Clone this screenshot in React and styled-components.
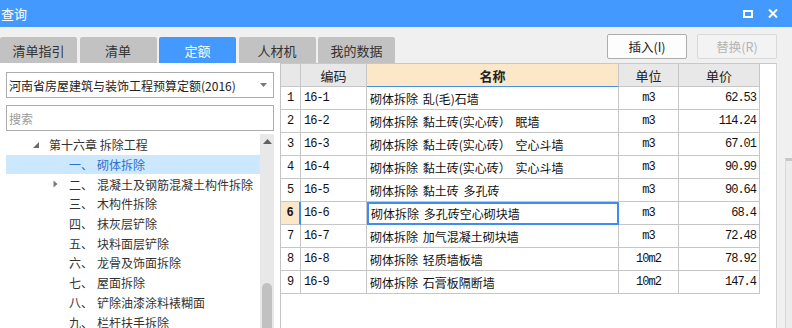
import styled, { createGlobalStyle } from "styled-components";

const Global = createGlobalStyle`
  html, body { margin: 0; padding: 0; }
  body {
    width: 792px;
    height: 328px;
    overflow: hidden;
    background: #ffffff;
    font-family: "Noto Sans CJK SC", "Noto Sans", sans-serif;
    color: #333;
  }
  * { box-sizing: border-box; }
`;

const Window = styled.div`
  width: 792px;
  height: 328px;
  display: flex;
  flex-direction: column;
  overflow: hidden;
`;

const TitleBar = styled.div`
  height: 27px;
  flex: 0 0 27px;
  background: #4499fe;
  color: #fff;
  display: flex;
  align-items: center;
  padding: 0 14px 0 1px;
  font-size: 13px;
`;

const TitleText = styled.div`
  flex: 1;
`;

const TitleIcons = styled.div`
  display: flex;
  align-items: center;
  gap: 15px;
`;

const Toolbar = styled.div`
  height: 36px;
  flex: 0 0 36px;
  background: #f0f0f0;
  display: flex;
  align-items: flex-end;
  padding-right: 15px;
`;

const Tabs = styled.div`
  display: flex;
  gap: 2.5px;
  flex: 1;
`;

const Tab = styled.div`
  width: 77px;
  height: 26px;
  border-radius: 2px 2px 0 0;
  background: ${(p) => (p.$active ? "#4499fe" : "#c2c2c2")};
  color: ${(p) => (p.$active ? "#fff" : "#333")};
  font-size: 13px;
  display: flex;
  align-items: center;
  justify-content: center;
`;

const Buttons = styled.div`
  display: flex;
  gap: 10px;
  align-self: flex-start;
  margin-top: 7px;
`;

const Button = styled.div`
  width: 80px;
  height: 25px;
  border: 1px solid ${(p) => (p.$disabled ? "#d9d9d9" : "#adadad")};
  border-radius: 2px;
  background: ${(p) => (p.$disabled ? "#f3f3f3" : "#fdfdfd")};
  color: ${(p) => (p.$disabled ? "#b4b4b4" : "#222")};
  font-size: 12.5px;
  display: flex;
  align-items: center;
  justify-content: center;
`;

const Main = styled.div`
  flex: 1;
  display: flex;
  min-height: 0;
`;

const LeftPanel = styled.div`
  width: 280px;
  flex: 0 0 280px;
  padding: 9px 6px 0 6px;
  display: flex;
  flex-direction: column;
  background: #fff;
`;

const Select = styled.div`
  height: 26px;
  border: 1px solid #acacac;
  display: flex;
  align-items: center;
  padding: 0 6px 0 2px;
  font-size: 12px;
  color: #222;
  white-space: nowrap;
`;

const SelectText = styled.div`
  flex: 1;
`;

const Search = styled.div`
  height: 26px;
  margin-top: 7px;
  border: 1px solid #acacac;
  display: flex;
  align-items: center;
  padding-left: 2px;
  font-size: 12px;
  color: #9a9a9a;
`;

const TreeArea = styled.div`
  flex: 1;
  margin-top: 3px;
  display: flex;
  min-height: 0;
`;

const TreeList = styled.div`
  flex: 1;
  padding-top: 1px;
`;

const TreeRow = styled.div`
  height: 19.7px;
  display: flex;
  align-items: center;
  padding-left: ${(p) => p.$indent}px;
  background: ${(p) => (p.$selected ? "#cce8ff" : "transparent")};
  color: ${(p) => (p.$selected ? "#2f6fd0" : "#333")};
  font-size: 12px;
  white-space: nowrap;
`;

const Toggle = styled.div`
  width: 16px;
  flex: 0 0 16px;
  display: flex;
  align-items: center;
`;

const Num = styled.div`
  width: 28px;
  flex: 0 0 28px;
`;

const ScrollBar = styled.div`
  width: 14px;
  flex: 0 0 14px;
  background: #e8e8e8;
  display: flex;
  flex-direction: column;
  align-items: center;
`;

const ScrollArrow = styled.div`
  height: 12px;
  display: flex;
  align-items: center;
  margin-top: 1px;
`;

const ScrollThumb = styled.div`
  width: 10px;
  margin-top: 136px;
  flex: 1;
  background: #c1c1c1;
  border-radius: 5px 5px 0 0;
`;

const TablePanel = styled.div`
  width: 497px;
  flex: 0 0 497px;
  border-left: 1px solid #c4c4c4;
  border-right: 1px solid #d4d4d4;
  border-top: 1px solid #c8c8c8;
  background: #fff;
`;

const Grid = styled.div`
  display: grid;
  grid-template-columns: 20px 66px 252px 60px 81px;
  grid-auto-rows: 23px;
  width: 479px;
`;

const HeadCell = styled.div`
  background: ${(p) => (p.$hot ? "#fde7c9" : "#e8e8e8")};
  border-right: 1px solid #c6c6c6;
  border-bottom: 1px solid ${(p) => (p.$hot ? "#4a90e2" : "#c6c6c6")};
  font-size: 13px;
  font-weight: ${(p) => (p.$hot ? 700 : 400)};
  color: #222;
  display: flex;
  align-items: center;
  justify-content: center;
`;

const Cell = styled.div`
  border-right: 1px solid #c6c6c6;
  border-bottom: 1px solid #c6c6c6;
  display: flex;
  align-items: center;
  justify-content: ${(p) => p.$align || "flex-start"};
  padding: 0 3px;
  font-size: 12px;
  color: #111;
  white-space: nowrap;
  overflow: hidden;
`;

const RowNum = styled(Cell)`
  justify-content: center;
  padding: 0;
  font-family: "Liberation Mono", monospace;
  font-size: 12px;
  background: ${(p) => (p.$current ? "#fde7c9" : "#fff")};
  font-weight: ${(p) => (p.$current ? 700 : 400)};
  border-right: ${(p) => (p.$current ? "2px solid #3d8ef0" : "1px solid #c6c6c6")};
`;

const Mono = styled(Cell)`
  font-family: "Liberation Mono", monospace;
  font-size: 12px;
  letter-spacing: -1px;
`;

const NameCell = styled(Cell)`
  border: ${(p) => (p.$selected ? "2px solid #3d8ef0" : undefined)};
  padding-left: ${(p) => (p.$selected ? "2px" : "3px")};
  word-spacing: 2px;
`;

const RightStrip = styled.div`
  flex: 1;
  background: #f0f0f0;
  display: flex;
  justify-content: flex-end;
`;

const StripInner = styled.div`
  width: 7px;
  margin-top: 95px;
  border-top: 3px solid #c8c8c8;
  border-left: 1px solid #dadada;
  background: #ececec;
`;

const tabs = ["清单指引", "清单", "定额", "人材机", "我的数据"];

const tree = [
  ["一、", "砌体拆除", false],
  ["二、", "混凝土及钢筋混凝土构件拆除", true],
  ["三、", "木构件拆除", false],
  ["四、", "抹灰层铲除", false],
  ["五、", "块料面层铲除", false],
  ["六、", "龙骨及饰面拆除", false],
  ["七、", "屋面拆除", false],
  ["八、", "铲除油漆涂料裱糊面", false],
  ["九、", "栏杆扶手拆除", false],
];

const rows = [
  ["16-1", "砌体拆除 乱(毛)石墙", "m3", "62.53"],
  ["16-2", "砌体拆除 黏土砖(实心砖） 眠墙", "m3", "114.24"],
  ["16-3", "砌体拆除 黏土砖(实心砖） 空心斗墙", "m3", "67.01"],
  ["16-4", "砌体拆除 黏土砖(实心砖） 实心斗墙", "m3", "90.99"],
  ["16-5", "砌体拆除 黏土砖 多孔砖", "m3", "90.64"],
  ["16-6", "砌体拆除 多孔砖空心砌块墙", "m3", "68.4"],
  ["16-7", "砌体拆除 加气混凝土砌块墙", "m3", "72.48"],
  ["16-8", "砌体拆除 轻质墙板墙", "10m2", "78.92"],
  ["16-9", "砌体拆除 石膏板隔断墙", "10m2", "147.4"],
];

export default function App() {
  return (
    <Window>
      <Global />
      <TitleBar>
        <TitleText>查询</TitleText>
        <TitleIcons>
          <svg width="10" height="8" viewBox="0 0 10 8">
            <rect x="1" y="1" width="8" height="6" fill="none" stroke="#fff" strokeWidth="2" />
          </svg>
          <svg width="10" height="9" viewBox="0 0 10 9">
            <path d="M1 0.5 L9 8.5 M9 0.5 L1 8.5" stroke="#fff" strokeWidth="2" />
          </svg>
        </TitleIcons>
      </TitleBar>
      <Toolbar>
        <Tabs>
          {tabs.map((t) => (
            <Tab key={t} $active={t === "定额"}>{t}</Tab>
          ))}
        </Tabs>
        <Buttons>
          <Button>插入(I)</Button>
          <Button $disabled>替换(R)</Button>
        </Buttons>
      </Toolbar>
      <Main>
        <LeftPanel>
          <Select>
            <SelectText>河南省房屋建筑与装饰工程预算定额(2016)</SelectText>
            <svg width="7" height="4" viewBox="0 0 7 4">
              <path d="M0 0 H7 L3.5 4 Z" fill="#777" />
            </svg>
          </Select>
          <Search>搜索</Search>
          <TreeArea>
            <TreeList>
              <TreeRow $indent={27}>
                <Toggle>
                  <svg width="6" height="6" viewBox="0 0 6 6">
                    <path d="M6 0 V6 H0 Z" fill="#6a6a6a" />
                  </svg>
                </Toggle>
                第十六章 拆除工程
              </TreeRow>
              {tree.map(([n, name, exp], i) => (
                <TreeRow key={n} $indent={47} $selected={i === 0}>
                  <Toggle>
                    {exp && (
                      <svg width="5" height="8" viewBox="0 0 5 8">
                        <path d="M0.5 0.5 L4.5 4 L0.5 7.5 Z" fill="#777" />
                      </svg>
                    )}
                  </Toggle>
                  <Num>{n}</Num>
                  {name}
                </TreeRow>
              ))}
            </TreeList>
            <ScrollBar>
              <ScrollArrow>
                <svg width="9" height="5" viewBox="0 0 9 5">
                  <path d="M0 5 L4.5 0 L9 5 Z" fill="#606060" />
                </svg>
              </ScrollArrow>
              <ScrollThumb />
            </ScrollBar>
          </TreeArea>
        </LeftPanel>
        <TablePanel>
          <Grid>
            <HeadCell />
            <HeadCell>编码</HeadCell>
            <HeadCell $hot>名称</HeadCell>
            <HeadCell>单位</HeadCell>
            <HeadCell>单价</HeadCell>
            {rows.map(([code, name, unit, price], i) => (
              <Row key={code} i={i} code={code} name={name} unit={unit} price={price} />
            ))}
          </Grid>
        </TablePanel>
        <RightStrip>
          <StripInner />
        </RightStrip>
      </Main>
    </Window>
  );
}

function Row({ i, code, name, unit, price }) {
  const current = i === 5;
  return (
    <>
      <RowNum $current={current}>{i + 1}</RowNum>
      <Mono>{code}</Mono>
      <NameCell $selected={current}>{name}</NameCell>
      <Mono $align="center">{unit}</Mono>
      <Mono $align="flex-end">{price}</Mono>
    </>
  );
}
